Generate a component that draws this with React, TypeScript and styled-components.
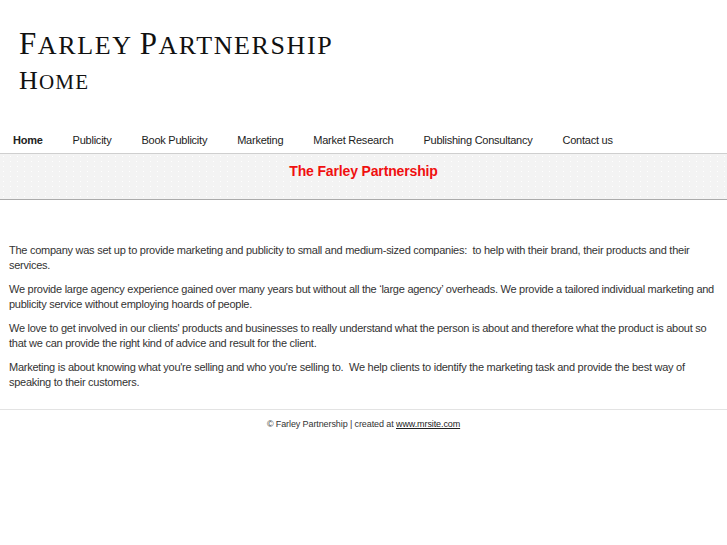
import styled, { createGlobalStyle } from "styled-components";

const GlobalStyle = createGlobalStyle`
  html, body {
    margin: 0;
    padding: 0;
    background: #fff;
  }
  body {
    font-family: "Liberation Sans", Arial, sans-serif;
    color: #333;
  }
`;

const Page = styled.div`
  width: 727px;
  min-height: 545px;
  background: #fff;
`;

const Masthead = styled.header`
  padding: 27px 0 0 19px;
  height: 100px;
  box-sizing: border-box;
  font-family: "Liberation Serif", "Times New Roman", serif;
  color: #111;
`;

const SiteName = styled.h1`
  margin: 0;
  font-weight: normal;
  font-size: 26px;
  line-height: 34px;
  letter-spacing: 1.6px;
  text-transform: uppercase;
`;

const PageName = styled.h2`
  margin: 4px 0 0;
  font-weight: normal;
  font-size: 21px;
  line-height: 28px;
  letter-spacing: 1.2px;
  text-transform: uppercase;
`;

const Big = styled.span<{ $size: number }>`
  font-size: ${(p) => p.$size}px;
`;

const Nav = styled.nav`
  margin-top: 28px;
  border-bottom: 1px solid #cfcfcf;
`;

const NavList = styled.ul`
  list-style: none;
  margin: 0;
  padding: 0 0 2px 13px;
  display: flex;
  gap: 30px;
  height: 23px;
  align-items: center;
`;

const NavItem = styled.li<{ $active?: boolean }>`
  font-size: 11px;
  letter-spacing: -0.24px;
  color: #222;
  font-weight: ${(p) => (p.$active ? "bold" : "normal")};
`;

const Banner = styled.div`
  height: 46px;
  box-sizing: border-box;
  padding-top: 9px;
  background-color: #f3f3f3;
  background-image: radial-gradient(#fff 0.6px, transparent 0.8px);
  background-size: 7px 5px;
  border-bottom: 1px solid #ababab;
  text-align: center;
`;

const BannerTitle = styled.h3`
  margin: 0;
  font-size: 14px;
  line-height: 17px;
  letter-spacing: -0.15px;
  font-weight: bold;
  color: #f01010;
`;

const Content = styled.main`
  padding: 43px 9px 10px;
  border-bottom: 1px solid #e3e3e3;
`;

const Para = styled.p`
  margin: 0 0 9px;
  font-size: 11px;
  line-height: 15px;
  letter-spacing: -0.26px;
  color: #333;
`;

const Footer = styled.footer`
  text-align: center;
  font-size: 9px;
  letter-spacing: -0.1px;
  padding-top: 9px;
  color: #333;
  a {
    color: #222;
    text-decoration: underline;
  }
`;

const nav = [
  "Home",
  "Publicity",
  "Book Publicity",
  "Marketing",
  "Market Research",
  "Publishing Consultancy",
  "Contact us",
];

export default function App() {
  return (
    <Page>
      <GlobalStyle />
      <Masthead>
        <SiteName>
          <Big $size={31}>F</Big>arley <Big $size={31}>P</Big>artnership
        </SiteName>
        <PageName>
          <Big $size={26}>H</Big>ome
        </PageName>
      </Masthead>
      <Nav>
        <NavList>
          {nav.map((item, i) => (
            <NavItem key={item} $active={i === 0}>
              {item}
            </NavItem>
          ))}
        </NavList>
      </Nav>
      <Banner>
        <BannerTitle>The Farley Partnership</BannerTitle>
      </Banner>
      <Content>
        <Para>
          The company was set up to provide marketing and publicity to small and
          medium-sized companies:&nbsp; to help with their brand, their products
          and their services.
        </Para>
        <Para>
          We provide large agency experience gained over many years but without
          all the ‘large agency’ overheads. We provide a tailored individual
          marketing and publicity service without employing hoards of people.
        </Para>
        <Para>
          We love to get involved in our clients' products and businesses to
          really understand what the person is about and therefore what the
          product is about so that we can provide the right kind of advice and
          result for the client.
        </Para>
        <Para>
          Marketing is about knowing what you're selling and who you're selling
          to.&nbsp; We help clients to identify the marketing task and provide
          the best way of speaking to their customers.
        </Para>
      </Content>
      <Footer>
        © Farley Partnership | created at <a href="#">www.mrsite.com</a>
      </Footer>
    </Page>
  );
}
